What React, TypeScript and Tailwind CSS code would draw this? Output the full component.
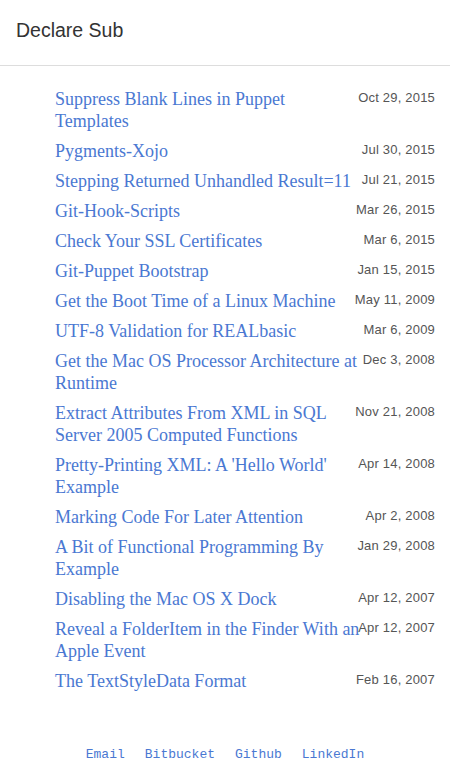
import React from "react";

const posts: [string, string][] = [
  ["Suppress Blank Lines in Puppet Templates", "Oct 29, 2015"],
  ["Pygments-Xojo", "Jul 30, 2015"],
  ["Stepping Returned Unhandled Result=11", "Jul 21, 2015"],
  ["Git-Hook-Scripts", "Mar 26, 2015"],
  ["Check Your SSL Certificates", "Mar 6, 2015"],
  ["Git-Puppet Bootstrap", "Jan 15, 2015"],
  ["Get the Boot Time of a Linux Machine", "May 11, 2009"],
  ["UTF-8 Validation for REALbasic", "Mar 6, 2009"],
  ["Get the Mac OS Processor Architecture at Runtime", "Dec 3, 2008"],
  ["Extract Attributes From XML in SQL Server 2005 Computed Functions", "Nov 21, 2008"],
  ["Pretty-Printing XML: A 'Hello World' Example", "Apr 14, 2008"],
  ["Marking Code For Later Attention", "Apr 2, 2008"],
  ["A Bit of Functional Programming By Example", "Jan 29, 2008"],
  ["Disabling the Mac OS X Dock", "Apr 12, 2007"],
  ["Reveal a FolderItem in the Finder With an Apple Event", "Apr 12, 2007"],
  ["The TextStyleData Format", "Feb 16, 2007"],
];

export default function App() {
  return (
    <div className="w-[450px] min-h-[782px] bg-white">
      <header className="h-[66px] border-b border-[#dddddd] flex items-center px-4">
        <h1 className="text-[19.5px] text-[#333333] font-['Liberation_Sans',sans-serif] leading-none -mt-[3px]">
          Declare Sub
        </h1>
      </header>
      <ul className="pl-[55px] pr-[15px] pt-[22px] flex flex-col gap-2">
        {posts.map(([t, d]) => (
          <li key={t} className="flex items-start">
            <a className="w-[306px] shrink-0 text-[18px] leading-[22px] text-[#4a78d2] font-['Liberation_Serif',serif]">
              {t}
            </a>
            <div className="flex-1 min-w-0 flex justify-end">
              <span className="shrink-0 whitespace-nowrap text-[13px] leading-[20px] text-[#555555] font-['Liberation_Sans',sans-serif] tracking-[0.2px]">
                {d}
              </span>
            </div>
          </li>
        ))}
      </ul>
      <footer className="flex justify-center gap-[20px] mt-[56px] pb-4 font-['Liberation_Mono',monospace] text-[13px] text-[#4a78d2] leading-none">
        <a>Email</a>
        <a>Bitbucket</a>
        <a>Github</a>
        <a>LinkedIn</a>
      </footer>
    </div>
  );
}
